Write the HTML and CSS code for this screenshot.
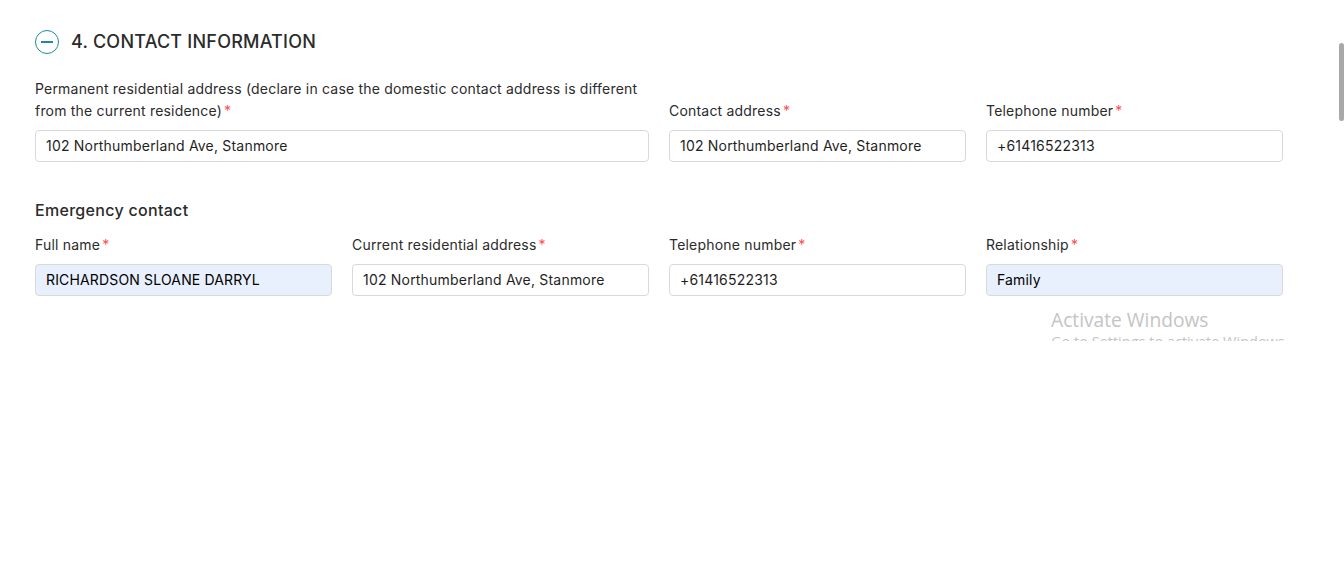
FILE: index.html
```html
<!DOCTYPE html>
<html lang="en">
<head>
    <meta charset="UTF-8">
    <meta name="viewport" content="width=device-width, initial-scale=1.0">
    <title>Contact information</title>
    <link rel="stylesheet" href="styles.css">
</head>
<body>
    <div class="section">
        <div class="section-title">
            <svg class="collapse-icon" width="24" height="24" viewBox="0 0 24 24" fill="none">
                <circle cx="12" cy="12" r="11.5" stroke="#1b8a99" stroke-width="1"/>
                <path d="M6 12H18" stroke="#1b8a99" stroke-width="2"/>
            </svg>
            <h2>4. CONTACT INFORMATION</h2>
        </div>

        <div class="form-grid">
            <div class="field span-2">
                <label>Permanent residential address (declare in case the domestic contact address is different from the current residence)<span class="req">*</span></label>
                <input type="text" value="102 Northumberland Ave, Stanmore">
            </div>
            <div class="field">
                <label>Contact address<span class="req">*</span></label>
                <input type="text" value="102 Northumberland Ave, Stanmore">
            </div>
            <div class="field">
                <label>Telephone number<span class="req">*</span></label>
                <input type="text" value="+61416522313">
            </div>
        </div>

        <h3>Emergency contact</h3>

        <div class="form-grid">
            <div class="field">
                <label>Full name<span class="req">*</span></label>
                <input class="autofilled" type="text" value="RICHARDSON SLOANE DARRYL">
            </div>
            <div class="field">
                <label>Current residential address<span class="req">*</span></label>
                <input type="text" value="102 Northumberland Ave, Stanmore">
            </div>
            <div class="field">
                <label>Telephone number<span class="req">*</span></label>
                <input type="text" value="+61416522313">
            </div>
            <div class="field">
                <label>Relationship<span class="req">*</span></label>
                <input class="autofilled" type="text" value="Family">
            </div>
        </div>
    </div>

    <div class="activate">
        <div class="activate-title">Activate Windows</div>
        <div class="activate-sub">Go to Settings to activate Windows.</div>
    </div>
    <div class="scroll-thumb"></div>
</body>
</html>
```

FILE: styles.css
```css
* {
    box-sizing: border-box;
}

body {
    margin: 0;
    height: 568px;
    overflow: hidden;
    background-color: white;
    color: #2b2b2b;
    font-family: 'Inter', 'Liberation Sans', sans-serif;
}

.section {
    width: 1248px;
    margin-left: 35px;
    padding-top: 30px;
}

.section-title {
    display: flex;
    align-items: center;
    gap: 12px;
    height: 24px;
    margin-bottom: 24px;
}

.section-title h2 {
    margin: 0;
    font-size: 18px;
    font-weight: 500;
    line-height: 24px;
    letter-spacing: 0.22px;
}

.form-grid {
    display: grid;
    grid-template-columns: repeat(4, 297px);
    column-gap: 20px;
    align-items: end;
}

.span-2 {
    grid-column: span 2;
}

.field label {
    display: block;
    font-size: 14px;
    line-height: 22px;
    letter-spacing: 0.2px;
    margin-bottom: 8px;
}

.req {
    color: #ff4d4f;
    margin-left: 2px;
}

.field input {
    display: block;
    width: 100%;
    height: 32px;
    padding: 0 10px 2px;
    border: 1px solid #d9d9d9;
    border-radius: 4px;
    background-color: white;
    color: #1f1f1f;
    font-family: inherit;
    font-size: 14px;
    letter-spacing: 0.2px;
}

.field input.autofilled {
    background-color: #e8f0fe;
    color: black;
    letter-spacing: 0.16px;
}

h3 {
    margin: 37px 0 13px;
    font-size: 16px;
    font-weight: 500;
    line-height: 22px;
    letter-spacing: 0.3px;
}

/* windows watermark, cut off by the page below it */
.activate {
    position: absolute;
    left: 1051px;
    top: 308px;
    width: 240px;
    height: 33px;
    overflow: hidden;
    color: #c4c4c4;
    font-family: 'Open Sans', sans-serif;
}

.activate-title {
    font-size: 19.2px;
    line-height: 24px;
}

.activate-sub {
    font-size: 14.5px;
    line-height: 19px;
}

.scroll-thumb {
    position: absolute;
    right: 0;
    top: 43px;
    width: 5px;
    height: 78px;
    border-radius: 3px;
    background-color: #a8a8a8;
}
```
